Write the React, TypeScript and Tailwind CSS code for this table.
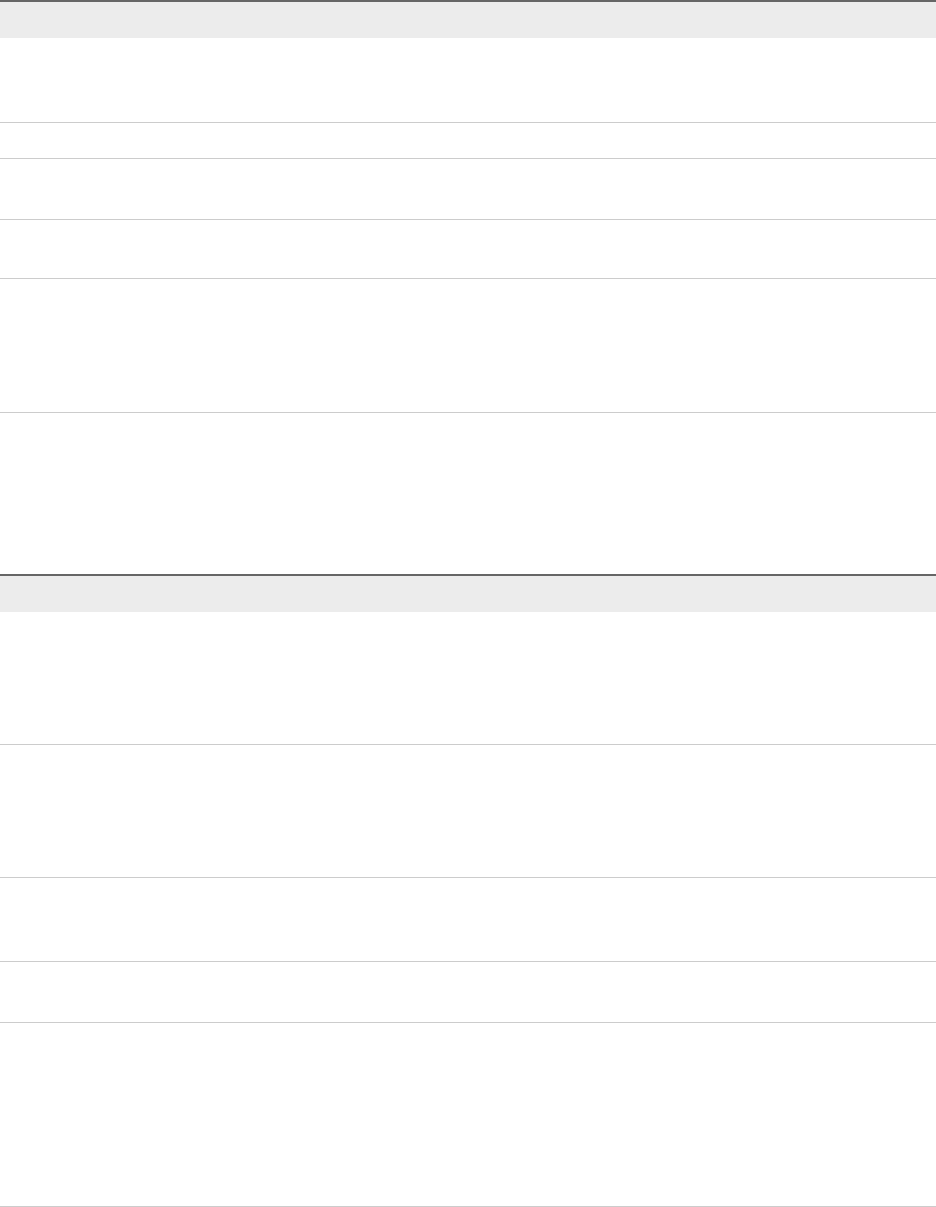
import React from 'react'

// row heights include the 1px bottom border
const firstRows = ['h-[85px]', 'h-[36px]', 'h-[61px]', 'h-[59px]', 'h-[134px]']
const secondRows = ['h-[133px]', 'h-[133px]', 'h-[84px]', 'h-[61px]', 'h-[184px]']

const Table = ({ rows, last }: { rows: string[]; last?: string }) => (
  <div className="w-full border-t-2 border-[#666666]">
    {/* Header */}
    <div className="h-[36px] bg-[#ececec]" />
    {rows.map((h, i) => (
      <div key={i} className={`${h} border-b border-[#cccccc]`} />
    ))}
    {last && <div className={last} />}
  </div>
)

export default function App() {
  return (
    <div className="w-[936px] min-h-[1207px] bg-white font-['Liberation_Sans',sans-serif]">
      <Table rows={firstRows} last="h-[161px]" />
      <Table rows={secondRows} />
    </div>
  )
}
